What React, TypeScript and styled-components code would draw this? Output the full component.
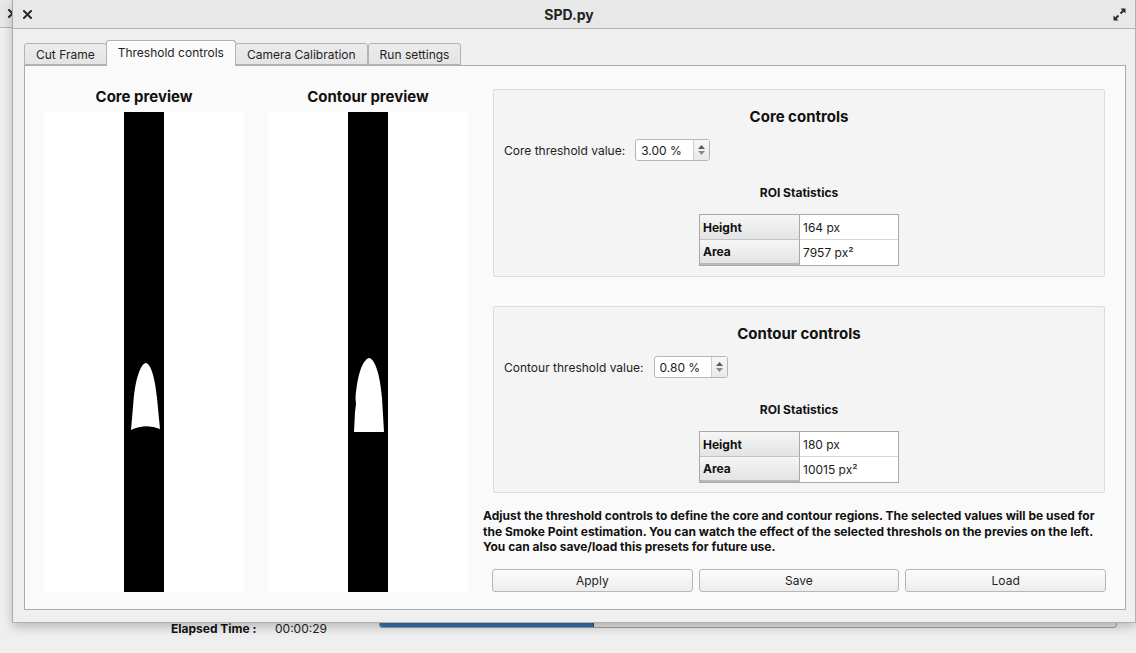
import React from "react";
import styled, { createGlobalStyle } from "styled-components";

const GlobalStyle = createGlobalStyle`
  html, body { margin: 0; padding: 0; }
  body {
    background: #efefef;
    font-family: Inter, "Noto Sans", "Liberation Sans", sans-serif;
    color: #1a1a1a;
  }
`;

const Screen = styled.div`
  position: relative;
  width: 1136px;
  height: 653px;
  overflow: hidden;
  background: #efefef;
`;

/* ---------- window behind the dialog ---------- */
const BackWindow = styled.div`
  position: absolute;
  inset: 0;
  display: flex;
  flex-direction: column;
  background: #efefef;
`;

const BackTitleBar = styled.div`
  height: 28px;
  flex: none;
  background: #e7e8e7;
  border-bottom: 1px solid #b4b4b4;
  display: flex;
  align-items: center;
  padding-left: 8px;
  box-sizing: border-box;
`;

const BackBody = styled.div`
  flex: 1;
  display: flex;
  flex-direction: column;
  justify-content: flex-end;
`;

const StatusRow = styled.div`
  display: flex;
  align-items: center;
  height: 18px;
  margin-bottom: 16px;
  font-size: 12px;
`;

const StatusLabel = styled.span`
  font-weight: 700;
  margin-left: 171px;
  width: 104px;
  color: #111;
`;

const StatusValue = styled.span`
  width: 104px;
  color: #222;
`;

const Progress = styled.div`
  width: 736px;
  height: 16px;
  margin-bottom: 18px;
  border: 1px solid #9c9c9c;
  border-radius: 3px;
  background: #e4e4e4;
  overflow: hidden;
  display: flex;
`;

const ProgressFill = styled.div`
  height: 100%;
  background: #2f73ad;
  border-right: 1px solid #1e4f7a;
`;

/* ---------- dialog ---------- */
const Dialog = styled.div`
  position: absolute;
  left: 12px;
  top: 0;
  width: 1124px;
  height: 623px;
  box-sizing: border-box;
  border-left: 1px solid #a9a9a9;
  border-right: 1px solid #b0b0b0;
  border-bottom: 1px solid #b0b0b0;
  background: #efefef;
  box-shadow: 0 4px 10px rgba(0, 0, 0, 0.22);
  display: flex;
  flex-direction: column;
`;

const TitleBar = styled.div`
  height: 29px;
  flex: none;
  box-sizing: border-box;
  background: #e7e8e7;
  border-bottom: 1px solid #b4b4b4;
  display: grid;
  grid-template-columns: 40px 1fr 40px;
  align-items: center;
`;

const TitleText = styled.div`
  text-align: center;
  font-weight: 700;
  font-size: 14px;
  color: #222;
  padding-right: 10px;
`;

const IconCell = styled.div<{ $align: string }>`
  display: flex;
  justify-content: ${(p) => p.$align};
  align-items: center;
  padding: 0 9px 0 10px;
`;

const DialogBody = styled.div`
  flex: 1;
  padding: 11px 9px 12px 11px;
  display: flex;
  flex-direction: column;
`;

const TabBar = styled.div`
  display: flex;
  align-items: flex-end;
  height: 25px;
  position: relative;
  z-index: 1;
`;

const Tab = styled.div<{ $active?: boolean }>`
  box-sizing: border-box;
  height: ${(p) => (p.$active ? "26px" : "22px")};
  margin-bottom: ${(p) => (p.$active ? "-1px" : "0")};
  padding: ${(p) => (p.$active ? "0 11px 2px" : "0 11px")};
  display: flex;
  align-items: center;
  font-size: 12px;
  color: #1f1f1f;
  border: 1px solid #b3b3b3;
  border-bottom: ${(p) => (p.$active ? "none" : "1px solid #b3b3b3")};
  border-radius: 3px 3px 0 0;
  background: ${(p) =>
    p.$active ? "#fbfbfb" : "linear-gradient(#ececec, #e4e4e4)"};
  margin-left: ${(p) => (p.$active ? "-1px" : "0")};
  margin-right: ${(p) => (p.$active ? "-1px" : "0")};
  position: relative;
  z-index: ${(p) => (p.$active ? 2 : 1)};
  white-space: nowrap;
`;

const Pane = styled.div`
  height: 545px;
  box-sizing: border-box;
  border: 1px solid #acacac;
  background: #fafafa;
  display: flex;
  padding: 0 19px 0 19px;
  gap: 15px;
`;

const PreviewArea = styled.div`
  display: flex;
  gap: 24px;
`;

const PreviewColumn = styled.div`
  width: 200px;
  display: flex;
  flex-direction: column;
`;

const PreviewTitle = styled.div`
  height: 46px;
  display: flex;
  align-items: center;
  justify-content: center;
  padding-top: 15px;
  box-sizing: border-box;
  font-weight: 700;
  font-size: 15px;
  color: #111;
`;

const PreviewImage = styled.div`
  height: 480px;
  background: #ffffff;
  display: flex;
  justify-content: center;
`;

const Stripe = styled.svg`
  width: 40px;
  height: 480px;
  display: block;
`;

const RightColumn = styled.div`
  flex: 1;
  display: flex;
  flex-direction: column;
  padding-top: 23px;
`;

const GroupBox = styled.div<{ $height: number }>`
  margin-left: 10px;
  margin-right: 1px;
  height: ${(p) => p.$height}px;
  box-sizing: border-box;
  border: 1px solid #dcdcdc;
  border-radius: 2px;
  background: #f4f4f4;
  display: flex;
  flex-direction: column;
  padding: 18px 10px 0;
`;

const GroupTitle = styled.div`
  height: 18px;
  line-height: 18px;
  text-align: center;
  font-weight: 700;
  font-size: 15px;
  color: #111;
`;

const ValueRow = styled.div`
  display: flex;
  align-items: center;
  gap: 10px;
  margin-top: 13px;
  height: 22px;
  font-size: 12px;
  color: #222;
`;

const SpinBox = styled.div<{ $width: number }>`
  width: ${(p) => p.$width}px;
  height: 22px;
  box-sizing: border-box;
  border: 1px solid #b5b5b5;
  border-radius: 3px;
  background: #fff;
  display: flex;
`;

const SpinText = styled.div`
  flex: 1;
  display: flex;
  align-items: center;
  padding-left: 5px;
  font-size: 12px;
  color: #1a1a1a;
`;

const SpinButtons = styled.div`
  width: 15px;
  border-left: 1px solid #cfcfcf;
  background: linear-gradient(#f7f7f7, #e9e9e9);
  border-radius: 0 2px 2px 0;
  display: flex;
  align-items: center;
  justify-content: center;
`;

const StatsTitle = styled.div`
  margin-top: 24px;
  height: 16px;
  line-height: 16px;
  text-align: center;
  font-weight: 700;
  font-size: 12px;
  color: #111;
`;

const StatsTable = styled.div`
  margin: 13px auto 0;
  width: 200px;
  box-sizing: border-box;
  border: 1px solid #a9a9a9;
  display: grid;
  grid-template-columns: 100px 1fr;
  background: #fff;
`;

const HeadCell = styled.div<{ $last?: boolean }>`
  height: 25px;
  box-sizing: border-box;
  display: flex;
  align-items: center;
  padding-left: 3px;
  font-weight: 700;
  font-size: 12px;
  color: #111;
  background: linear-gradient(#f6f6f6, #e3e3e3);
  border-right: 1px solid #a9a9a9;
  border-bottom: ${(p) => (p.$last ? "2px solid #b9b9b9" : "1px solid #c3c3c3")};
`;

const ValueCell = styled.div<{ $last?: boolean }>`
  height: 25px;
  box-sizing: border-box;
  display: flex;
  align-items: center;
  padding-left: 3px;
  font-size: 12px;
  color: #1a1a1a;
  border-bottom: ${(p) => (p.$last ? "none" : "1px solid #d6d6d6")};
`;

const Description = styled.div`
  margin-top: 15px;
  font-weight: 700;
  font-size: 12px;
  line-height: 15.5px;
  color: #111;
`;

const ButtonRow = styled.div`
  display: grid;
  grid-template-columns: 1fr 1fr 1fr;
  gap: 6px;
  margin: 14px 0 0 9px;
`;

const Button = styled.div`
  height: 23px;
  box-sizing: border-box;
  border: 1px solid #b6b6b6;
  border-radius: 3px;
  background: linear-gradient(#fbfbfb, #ededed);
  display: flex;
  align-items: center;
  justify-content: center;
  font-size: 12px;
  color: #1f1f1f;
`;

/* ---------- icons ---------- */
const CloseIcon = ({ size = 9 }: { size?: number }) => (
  <svg width={size} height={size} viewBox="0 0 9 9">
    <path d="M1 1 L8 8 M8 1 L1 8" stroke="#2a2a2a" strokeWidth="2" strokeLinecap="square" />
  </svg>
);

const MaximizeIcon = () => (
  <svg width="13" height="13" viewBox="0 0 13 13">
    <path d="M7.5 0.5 H12.5 V5.5 Z" fill="#2a2a2a" />
    <path d="M11 2 L7.5 5.5" stroke="#2a2a2a" strokeWidth="2" />
    <path d="M0.5 7.5 V12.5 H5.5 Z" fill="#2a2a2a" />
    <path d="M2 11 L5.5 7.5" stroke="#2a2a2a" strokeWidth="2" />
  </svg>
);

const SpinArrows = () => (
  <svg width="9" height="14" viewBox="0 0 9 14">
    <path d="M1 6 L4.5 2 L8 6 Z" fill="#5a5a5a" />
    <path d="M1 8 L4.5 12 L8 8 Z" fill="#8a8a8a" />
  </svg>
);

const FlameStripe = ({ d }: { d: string }) => (
  <Stripe viewBox="0 0 40 480" preserveAspectRatio="none">
    <rect x="0" y="0" width="40" height="480" fill="#000" />
    <path d={d} fill="#fff" />
  </Stripe>
);

const coreFlame =
  "M22 251 C27 252 31 266 33 286 L36 317 Q22 311 7 318 L9.5 289 C11.5 266 17 251 22 251 Z";
const contourFlame =
  "M21 246 C27 247 32 262 34 286 L36 320 L6 320 L7 300 L8 292 L7.5 286 C9.5 262 14.5 248 21 246 Z";

type Stat = { height: string; area: string };

const Controls = ({
  title,
  label,
  value,
  spinWidth,
  stats,
  height,
}: {
  title: string;
  label: string;
  value: string;
  spinWidth: number;
  stats: Stat;
  height: number;
}) => (
  <GroupBox $height={height}>
    <GroupTitle>{title}</GroupTitle>
    <ValueRow>
      <span>{label}</span>
      <SpinBox $width={spinWidth}>
        <SpinText>{value}</SpinText>
        <SpinButtons>
          <SpinArrows />
        </SpinButtons>
      </SpinBox>
    </ValueRow>
    <StatsTitle>ROI Statistics</StatsTitle>
    <StatsTable>
      <HeadCell>Height</HeadCell>
      <ValueCell>{stats.height}</ValueCell>
      <HeadCell $last>Area</HeadCell>
      <ValueCell $last>{stats.area} px²</ValueCell>
    </StatsTable>
  </GroupBox>
);

const GroupGap = styled.div`
  height: 29px;
  flex: none;
`;

export default function App() {
  return (
    <>
      <GlobalStyle />
      <Screen>
        <BackWindow>
          <BackTitleBar>
            <CloseIcon />
          </BackTitleBar>
          <BackBody>
            <StatusRow>
              <StatusLabel>Elapsed Time :</StatusLabel>
              <StatusValue>00:00:29</StatusValue>
              <Progress>
                <ProgressFill style={{ width: "29%" }} />
              </Progress>
            </StatusRow>
          </BackBody>
        </BackWindow>

        <Dialog>
          <TitleBar>
            <IconCell $align="flex-start">
              <CloseIcon />
            </IconCell>
            <TitleText>SPD.py</TitleText>
            <IconCell $align="flex-end">
              <MaximizeIcon />
            </IconCell>
          </TitleBar>
          <DialogBody>
            <TabBar>
              <Tab>Cut Frame</Tab>
              <Tab $active>Threshold controls</Tab>
              <Tab>Camera Calibration</Tab>
              <Tab>Run settings</Tab>
            </TabBar>
            <Pane>
              <PreviewArea>
                <PreviewColumn>
                  <PreviewTitle>Core preview</PreviewTitle>
                  <PreviewImage>
                    <FlameStripe d={coreFlame} />
                  </PreviewImage>
                </PreviewColumn>
                <PreviewColumn>
                  <PreviewTitle>Contour preview</PreviewTitle>
                  <PreviewImage>
                    <FlameStripe d={contourFlame} />
                  </PreviewImage>
                </PreviewColumn>
              </PreviewArea>
              <RightColumn>
                <Controls
                  title="Core controls"
                  label="Core threshold value:"
                  value="3.00 %"
                  spinWidth={75}
                  stats={{ height: "164 px", area: "7957" }}
                  height={188}
                />
                <GroupGap />
                <Controls
                  title="Contour controls"
                  label="Contour threshold value:"
                  value="0.80 %"
                  spinWidth={74}
                  stats={{ height: "180 px", area: "10015" }}
                  height={187}
                />
                <Description>
                  Adjust the threshold controls to define the core and contour regions. The selected
                  values will be used for the Smoke Point estimation. You can watch the effect of the
                  selected threshols on the previes on the left. You can also save/load this presets
                  for future use.
                </Description>
                <ButtonRow>
                  <Button>Apply</Button>
                  <Button>Save</Button>
                  <Button>Load</Button>
                </ButtonRow>
              </RightColumn>
            </Pane>
          </DialogBody>
        </Dialog>
      </Screen>
    </>
  );
}
